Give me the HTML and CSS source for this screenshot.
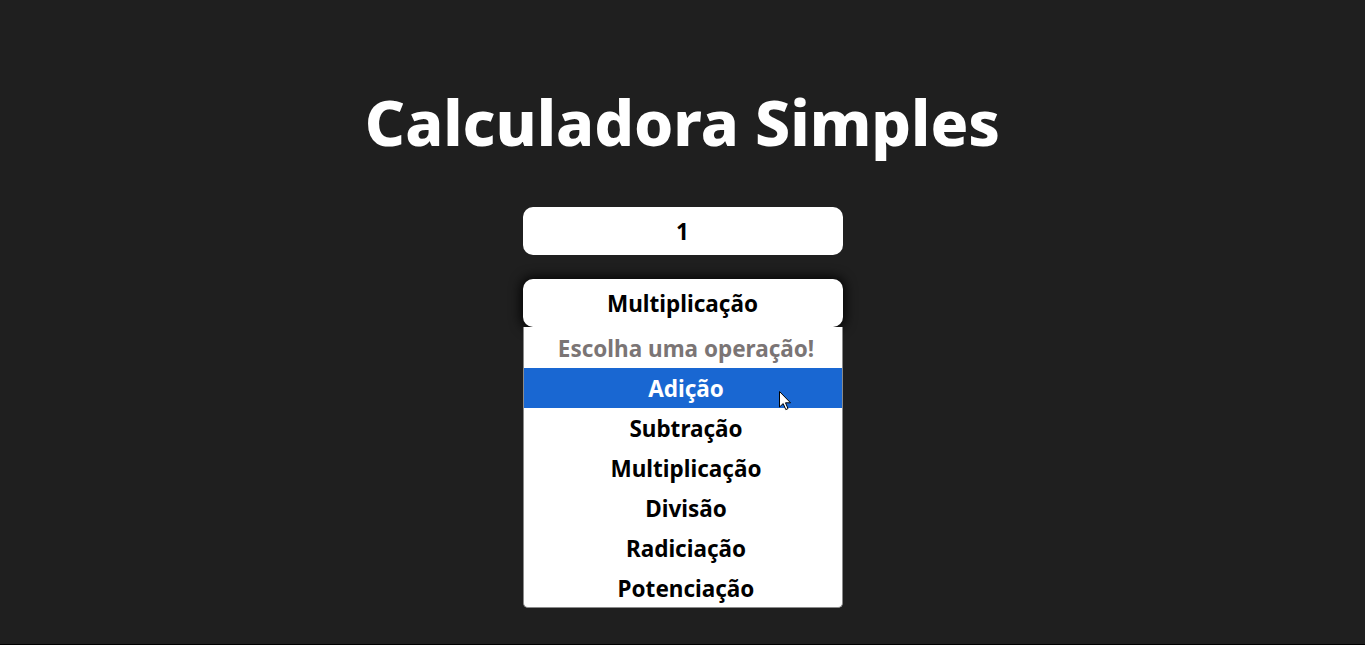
FILE: index.html
```html
<!DOCTYPE html>
<html lang="pt-BR">
<head>
<meta charset="utf-8">
<title>Calculadora Simples</title>
<link rel="stylesheet" href="styles.css">
</head>
<body>
<main class="app">
  <h1 class="title">Calculadora Simples</h1>
  <form class="calc">
    <input class="field" type="text" value="1">
    <div class="select-wrap">
      <div class="select">Multiplicação</div>
      <ul class="dropdown">
        <li class="opt placeholder">Escolha uma operação!</li>
        <li class="opt active">Adição</li>
        <li class="opt">Subtração</li>
        <li class="opt">Multiplicação</li>
        <li class="opt">Divisão</li>
        <li class="opt">Radiciação</li>
        <li class="opt">Potenciação</li>
      </ul>
      <svg class="cursor" width="13" height="20" viewBox="0 0 13 20"><path d="M0.5 0.5 L0.5 16 L4.2 12.6 L6.8 18.6 L9 17.6 L6.5 11.8 L11.5 11.8 Z" fill="#fff" stroke="#000" stroke-width="1" stroke-linejoin="round"/></svg>
    </div>
    <input class="field" type="text" value="">
    <button class="btn" type="button" aria-label="Calcular"></button>
  </form>
</main>
</body>
</html>
```

FILE: styles.css
```css
html { background: #000; }
body {
  margin: 0;
  font-family: "Noto Sans", "Open Sans", sans-serif;
}
.app {
  height: 644px;
  background: #1f1f1f;
  display: flex;
  flex-direction: column;
  align-items: center;
  overflow: hidden;
}
.title {
  margin: 82px 0 0;
  color: #fff;
  font-size: 62.5px;
  font-weight: 800;
  line-height: 80px;
  letter-spacing: 0;
}
.calc {
  margin-top: 45px;
  display: flex;
  flex-direction: column;
  gap: 24px;
  width: 320px;
}
.field, .select, .btn {
  box-sizing: border-box;
  width: 320px;
  height: 48px;
  border: none;
  border-radius: 10px;
  background: #fff;
  font-family: inherit;
  font-weight: 700;
  font-size: 22.5px;
  text-align: center;
  color: #000;
  outline: none;
  padding: 0;
}
.select-wrap { position: relative; }
.select {
  display: flex;
  align-items: center;
  justify-content: center;
  box-shadow: 0 0 12px 2px rgba(0,0,0,0.9);
}
.btn { background: #6b3fd9; color: #fff; }
.dropdown {
  position: absolute;
  left: 0;
  top: 48px;
  z-index: 2;
  margin: 0;
  padding: 1px 0 0;
  list-style: none;
  box-sizing: border-box;
  width: 320px;
  height: 281px;
  background: #fff;
  border: 1px solid #8a8a8a;
  border-top: none;
  border-radius: 0 0 5px 5px;
  overflow: hidden;
}
.opt {
  height: 40px;
  display: flex;
  align-items: center;
  justify-content: center;
  padding-left: 7px;
  font-weight: 700;
  font-size: 22.5px;
  color: #000;
}
.opt.placeholder { color: #7b7575; }
.opt.active { background: #1967d2; color: #fff; }
.cursor {
  position: absolute;
  left: 256px;
  top: 112px;
  z-index: 3;
}
```
